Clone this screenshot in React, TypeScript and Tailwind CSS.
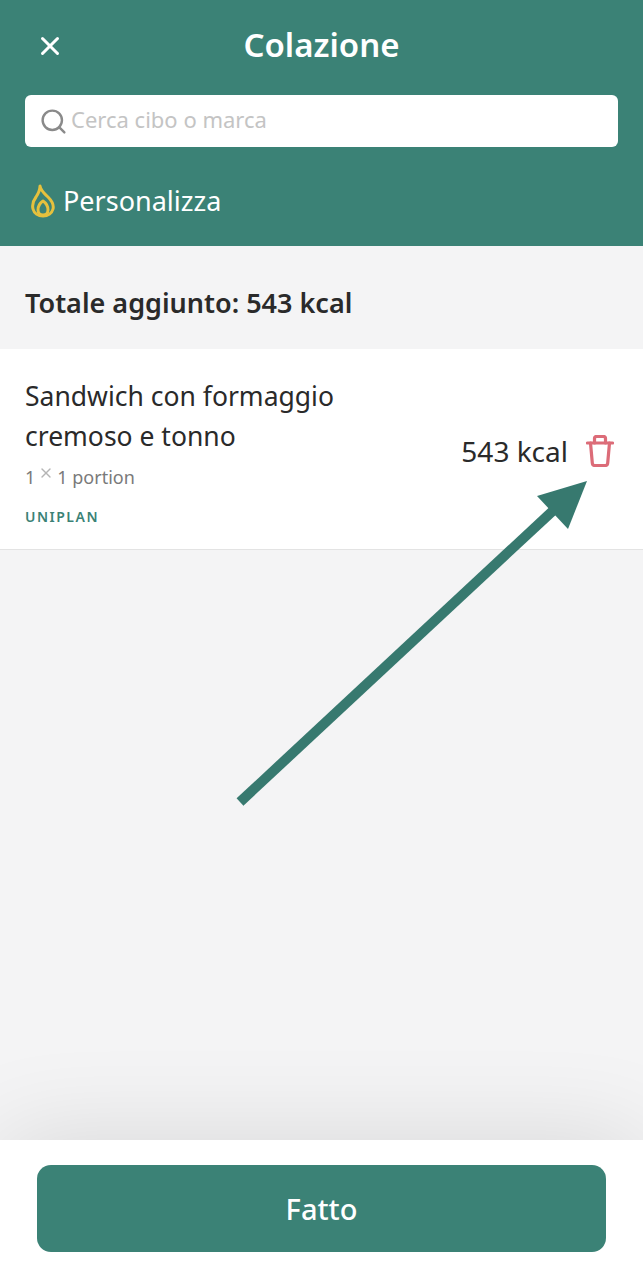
import { Search, X } from 'lucide-react';

const font = { fontFamily: '"Noto Sans", "Open Sans", sans-serif' };

function FlameIcon() {
	return (
		<svg width="24" height="34" viewBox="0 0 24 34" fill="none" stroke="#e6c13d" strokeWidth="3" strokeLinejoin="round">
			<path d="M9 2c1 5 4 7 8 11 4 4 6 8 5 12-1 4-5 7-10 7S3 29 2 25c-1-4 0-8 3-12 2-3 4-6 4-11z" />
			<path d="M12 17c3 2 5 6 5 9 0 3-2 5-5 5s-5-2-5-5c0-3 2-7 5-9z" />
		</svg>
	);
}

function TrashIcon() {
	return (
		<svg width="28" height="32" viewBox="0 0 28 32" fill="none" stroke="#dc6c78" strokeWidth="3.200" strokeLinecap="round" strokeLinejoin="round">
			<path d="M1.500 8h25" />
			<path d="M8.500 8V3.500c0-1 .8-2 2-2h7c1.200 0 2 1 2 2V8" />
			<path d="M4.500 8l1.800 20c.1 1.500 1 2.500 2.500 2.500h10.400c1.500 0 2.400-1 2.500-2.500L23.500 8" />
		</svg>
	);
}

function App() {
	return (
		<div className="relative flex h-[1280px] w-[643px] flex-col overflow-hidden bg-[#f4f4f5]" style={font}>
			{/* Header */}
			<header className="h-[246px] bg-[#3b8276] px-[25px]">
				<div className="relative flex h-[95px] items-center justify-center pb-[5px]">
					<X className="absolute left-[10px] top-[31px] text-white" size={30} strokeWidth={2.4} />
					<h1 className="text-[33px] font-semibold text-white">Colazione</h1>
				</div>
				<div className="flex h-[52px] items-center rounded-[6px] bg-white pb-[3px] pl-[14px]">
					<Search className="mt-[3px] text-[#8a8a8a]" size={29} strokeWidth={2} />
					<span className="ml-[3px] text-[22px] text-[#c4c4c4]">Cerca cibo o marca</span>
				</div>
				<div className="mt-[34px] flex items-center gap-[8px] pl-[6px]">
					<FlameIcon />
					<span className="text-[27px] leading-[40px] text-white">Personalizza</span>
				</div>
			</header>

			{/* Total */}
			<div className="flex h-[103px] items-center px-[25px] pt-[12px]">
				<h2 className="text-[27px] font-semibold text-[#2a2a2a]">Totale aggiunto: 543 kcal</h2>
			</div>

			{/* Item */}
			<div className="flex h-[201px] items-center justify-between border-b border-[#e3e3e3] bg-white pl-[25px] pr-[29px] pt-[3px]">
				<div>
					<p className="text-[26.500px] leading-[40px] text-[#2a2a2a]">
						Sandwich con formaggio
						<br />
						cremoso e tonno
					</p>
					<p className="mt-[9px] flex items-start text-[18px] leading-[24px] text-[#7a7a7a]">
						1<X className="mx-[3px] text-[#b5b5b5]" size={16} />1 portion
					</p>
					<p className="mt-[19px] text-[14px] font-semibold leading-[18px] tracking-[1.500px] text-[#3b8276]">UNIPLAN</p>
				</div>
				<div className="flex items-center gap-[18px]">
					<span className="text-[28px] text-[#2a2a2a]">543 kcal</span>
					<TrashIcon />
				</div>
			</div>

			{/* Empty area */}
			<div className="flex-1" />

			{/* Footer */}
			<footer className="relative flex h-[140px] justify-center bg-white pt-[25px] shadow-[0_0_100px_rgba(0,0,0,0.12)]">
				<button className="h-[87px] w-[569px] rounded-[14px] bg-[#3b8276] text-[29px] font-medium text-white">Fatto</button>
			</footer>

			{/* Arrow annotation */}
			<svg className="absolute left-0 top-0" width="643" height="1280" fill="none">
				<path d="M240 802L558 506" stroke="#37796f" strokeWidth="10" />
				<path d="M587 481L537 496L568 529Z" fill="#37796f" />
			</svg>
		</div>
	);
}

export default App;
